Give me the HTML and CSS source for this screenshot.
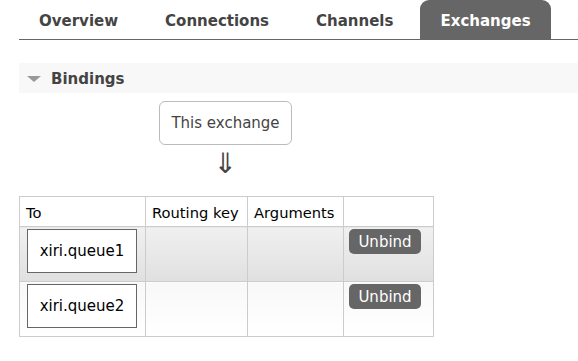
FILE: index.html
```html
<!DOCTYPE html>
<html>
<head>
    <title>Exchange: bindings</title>
    <link rel="stylesheet" href="styles.css">
</head>
<body>

<ul class="tabs">
    <li><a href="#">Overview</a></li>
    <li><a href="#">Connections</a></li>
    <li><a href="#">Channels</a></li>
    <li class="selected"><a href="#">Exchanges</a></li>
    <li><a href="#">Queues</a></li>
</ul>

<div class="section">
    <h2><span class="toggle"></span>Bindings</h2>
    <div class="hider">
        <div class="bindings-wrapper">
            <div class="exchange-box">This exchange</div>
            <div class="arrow">&dArr;</div>
        </div>
        <table class="list">
            <colgroup>
                <col class="col-to">
                <col class="col-key">
                <col class="col-args">
                <col class="col-act">
            </colgroup>
            <thead>
                <tr>
                    <th>To</th>
                    <th>Routing key</th>
                    <th>Arguments</th>
                    <th></th>
                </tr>
            </thead>
            <tbody>
                <tr class="alt1">
                    <td><span class="queue">xiri.queue1</span></td>
                    <td></td>
                    <td></td>
                    <td><button class="unbind">Unbind</button></td>
                </tr>
                <tr class="alt2">
                    <td><span class="queue">xiri.queue2</span></td>
                    <td></td>
                    <td></td>
                    <td><button class="unbind">Unbind</button></td>
                </tr>
            </tbody>
        </table>
    </div>
</div>

</body>
</html>
```

FILE: styles.css
```css
body { margin: 0; font-family: "DejaVu Sans", Verdana, sans-serif; font-size: 15px; color: #000; overflow: hidden; }

.tabs { list-style: none; margin: 0 0 0 19px; padding: 0; display: flex; gap: 7px; border-bottom: 1px solid #666; height: 39px; white-space: nowrap; overflow: hidden; }
.tabs li { display: flex; flex-shrink: 0; }
.tabs a { display: block; padding: 0 20px; line-height: 42px; height: 39px; font-weight: bold; font-size: 15px; color: #444; text-decoration: none; border-radius: 9px 9px 0 0; }
.tabs .selected a { background: #666; color: #fff; }

.section { margin: 23px 0 0 19px; }
.section h2 { margin: 0; height: 30px; display: flex; align-items: center; background: #f8f8f8; font-size: 15px; font-weight: bold; color: #444; padding: 2px 0 0 8px; box-sizing: border-box; }
.toggle { width: 0; height: 0; border-left: 7px solid transparent; border-right: 7px solid transparent; border-top: 6px solid #999; margin-right: 10px; }

.bindings-wrapper { margin-left: 140px; width: 133px; display: flex; flex-direction: column; align-items: center; padding-top: 8px; }
.exchange-box { width: 131px; height: 42px; border: 1px solid #bbb; border-radius: 6px; display: flex; align-items: center; justify-content: center; color: #444; font-size: 15px; }
.arrow { font-size: 28px; line-height: 28px; margin-top: 5px; color: #444; }

table.list { border-collapse: collapse; table-layout: fixed; width: 414px; margin: 18px 0 0 0; }
.col-to { width: 126px; }
.col-key { width: 102px; }
.col-args { width: 96px; }
.col-act { width: 90px; }
table.list th, table.list td { border: 1px solid #ccc; padding: 2px 5px 8px 5px; vertical-align: top; text-align: left; white-space: nowrap; }
table.list th { font-weight: normal; font-size: 14.7px; height: 18px; padding: 7px 6px 4px 6px; line-height: 18px; }
tr.alt1 td { background: linear-gradient(#f0f0f0, #e0e0e0); }
tr.alt2 td { background: linear-gradient(#f8f8f8, #ffffff); }
.queue { display: flex; align-items: center; justify-content: center; width: 108px; height: 42px; border: 1px solid #666; background: #fff; margin-left: 2px; font-size: 15px; }
.unbind { display: block; font-family: inherit; font-size: 15px; background: #666; color: #fff; border: none; border-radius: 5px; width: 72px; height: 25px; padding: 0; }
```
